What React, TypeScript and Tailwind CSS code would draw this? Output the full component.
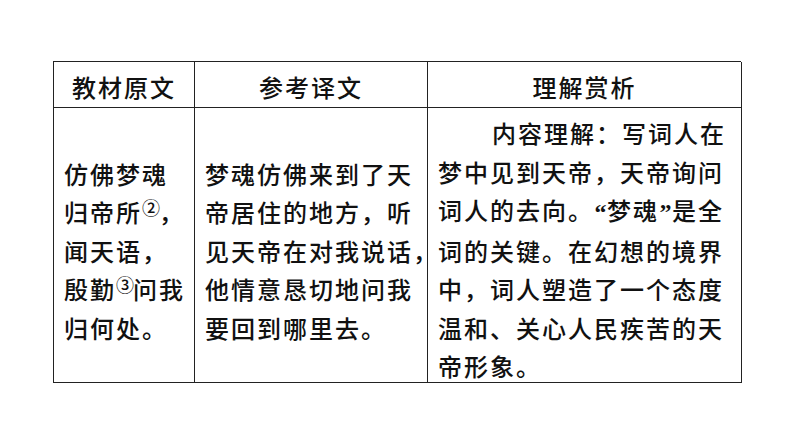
import React from 'react';

const font = { fontFamily: '"Noto Sans CJK SC", "Noto Sans", sans-serif' };

function Sup({ n }: { n: string }) {
  return (
    <span className="relative -top-[7px] inline-block w-[17px] text-[18px] tracking-normal leading-none">{n}</span>
  );
}

function Q({ c }: { c: string }) {
  return (
    <span className="inline-block w-[13px] text-center tracking-normal font-['Liberation_Serif',serif] font-bold">{c}</span>
  );
}

export default function App() {
  const cell = 'border-r-[1.5px] border-b-[1.5px] border-[#222]';
  return (
    <div className="w-[794px] h-[447px] bg-white pt-[61px] pl-[53px]" style={font}>
      <div className="grid grid-cols-[141px_233px_314px] grid-rows-[46px_275px] border-l-[1.5px] border-t-[1.5px] border-[#222] w-[688px] text-[24px] font-medium tracking-[2px] text-[#111] leading-[38.5px]">
        {/* header */}
        <div className={`${cell} flex items-center justify-center pt-[6px]`}>教材原文</div>
        <div className={`${cell} flex items-center justify-center pt-[6px]`}>参考译文</div>
        <div className={`${cell} flex items-center justify-center pt-[6px]`}>理解赏析</div>

        {/* body */}
        <div className={`${cell} flex flex-col justify-center pl-[10px] pt-[12px] whitespace-nowrap`}>
          <div>仿佛梦魂</div>
          <div>归帝所<Sup n="②" />，</div>
          <div>闻天语，</div>
          <div>殷勤<Sup n="③" />问我</div>
          <div>归何处。</div>
        </div>
        <div className={`${cell} flex flex-col justify-center pl-[10px] pt-[12px] whitespace-nowrap`}>
          <div>梦魂仿佛来到了天</div>
          <div>帝居住的地方，听</div>
          <div>见天帝在对我说话，</div>
          <div>他情意恳切地问我</div>
          <div>要回到哪里去。</div>
        </div>
        <div className={`${cell} flex flex-col justify-center pl-[10px] pt-[10px] whitespace-nowrap`}>
          <div className="pl-[54px]">内容理解：写词人在</div>
          <div>梦中见到天帝，天帝询问</div>
          <div>词人的去向。<Q c="“" />梦魂<Q c="”" />是全</div>
          <div>词的关键。在幻想的境界</div>
          <div>中，词人塑造了一个态度</div>
          <div>温和、关心人民疾苦的天</div>
          <div>帝形象。</div>
        </div>
      </div>
    </div>
  );
}
